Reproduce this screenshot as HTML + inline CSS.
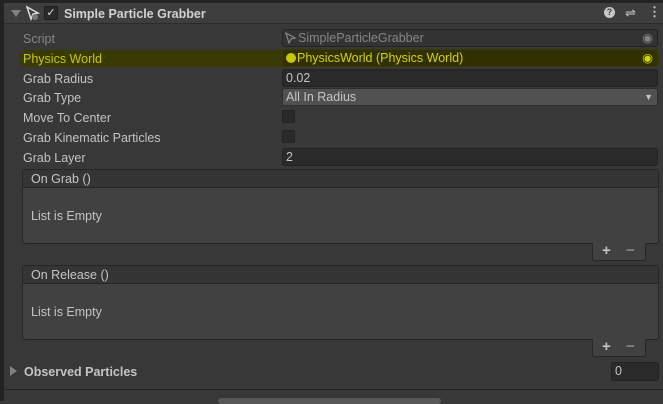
<!DOCTYPE html>
<html><head><style>
body{margin:0;width:663px;height:401px;background:#383838;overflow:hidden;font-family:"Liberation Sans",sans-serif;font-size:12.5px;color:#c4c4c4;position:relative}
div{position:absolute;box-sizing:border-box}
.lbl{left:23px;height:18px;line-height:20px}
.fld{left:282px;width:376px;height:18px;background:#2a2a2a;border:1px solid #232323;border-radius:3px;line-height:17px;padding-left:3px}
.cb{left:282px;width:13px;height:13px;background:#2a2a2a;border:1px solid #232323;border-radius:2px}
.lh{left:22px;width:637px;height:19px;background:#353535;border:1px solid #262626;border-radius:3px 3px 0 0;line-height:18px;padding-left:8px}
.lb{left:22px;width:637px;height:56px;background:#414141;border:1px solid #262626;border-top:none;border-radius:0 0 3px 3px;line-height:56px;padding-left:8px}
.ft{left:592px;width:54px;height:18px;background:#414141;border:1px solid #262626;border-top:none;border-radius:0 0 3px 3px;font-size:15px;font-weight:bold;line-height:16px}
</style></head><body>
<div style="left:0;top:0;width:663px;height:3px;background:#232323"></div>
<div style="left:0;top:0;width:4px;height:401px;background:#232323"></div>
<div style="left:4px;top:3px;width:659px;height:21px;background:#3e3e3e;border-bottom:1px solid #2b2b2b"></div>
<div style="left:11px;top:10px;width:0;height:0;border-left:5px solid transparent;border-right:5px solid transparent;border-top:7px solid #808080"></div>
<svg style="position:absolute;left:25px;top:5px" width="16" height="16"><path d="M2 2 L13 8 L8 9 L6 14 Z" fill="none" stroke="#ddd" stroke-width="1.5"/><circle cx="10" cy="12" r="3" fill="#777"/></svg>
<div style="left:44px;top:6px;width:14px;height:14px;background:#2a2a2a;border:1px solid #1e1e1e;border-radius:2px;color:#ddd;font-size:11px;line-height:12px;text-align:center">✓</div>
<div style="left:64px;top:6px;font-weight:bold;color:#d2d2d2;line-height:16px">Simple Particle Grabber</div>
<div style="left:604px;top:7px;width:11px;height:11px;border-radius:50%;background:#c8c8c8;color:#3e3e3e;font-size:9px;font-weight:bold;text-align:center;line-height:11px">?</div>
<div style="left:625px;top:6px;color:#c8c8c8;font-size:13px;line-height:14px">⇌</div>
<div style="left:648px;top:5px;color:#c8c8c8;font-size:13px;line-height:14px;font-weight:bold">⋮</div>
<div class="lbl" style="top:29px;color:#858585">Script</div>
<div class="fld" style="top:29px;color:#858585;background:#333;padding-left:15px">SimpleParticleGrabber<svg style="position:absolute;left:2px;top:2px" width="12" height="12"><path d="M1 1 L10 6 L6 7 L4 11 Z" fill="none" stroke="#888" stroke-width="1.2"/></svg><span style="position:absolute;right:4px;top:0">◉</span></div>
<div style="left:20px;top:50px;width:640px;height:17px;background:#3a3a05;border-radius:6px"></div>
<div class="lbl" style="top:49px;color:#c8c800">Physics World</div>
<div class="fld" style="top:49px;color:#d4d400;background:#303000;border-color:#3a3a00;padding-left:14px"><span style="position:absolute;left:3px;top:3px;width:10px;height:10px;border-radius:50%;background:#c8c800"></span>PhysicsWorld (Physics World)<span style="position:absolute;right:4px;top:0">◉</span></div>
<div class="lbl" style="top:69px">Grab Radius</div>
<div class="fld" style="top:69px">0.02</div>
<div class="lbl" style="top:88px">Grab Type</div>
<div class="fld" style="top:88px;background:#515151;border-color:#2f2f2f">All In Radius<span style="position:absolute;right:4px;top:0;font-size:9px">▼</span></div>
<div class="lbl" style="top:108px">Move To Center</div>
<div class="cb" style="top:110px"></div>
<div class="lbl" style="top:128px">Grab Kinematic Particles</div>
<div class="cb" style="top:130px"></div>
<div class="lbl" style="top:148px">Grab Layer</div>
<div class="fld" style="top:148px">2</div>
<div class="lh" style="top:169px">On Grab ()</div>
<div class="lb" style="top:188px">List is Empty</div>
<div class="ft" style="top:243px"><span style="position:absolute;left:9px">+</span><span style="position:absolute;left:33px;color:#888">−</span></div>
<div class="lh" style="top:265px">On Release ()</div>
<div class="lb" style="top:284px">List is Empty</div>
<div class="ft" style="top:339px"><span style="position:absolute;left:9px">+</span><span style="position:absolute;left:33px;color:#888">−</span></div>
<div style="left:10px;top:366px;width:0;height:0;border-top:5px solid transparent;border-bottom:5px solid transparent;border-left:7px solid #808080"></div>
<div style="left:24px;top:364px;font-weight:bold;line-height:16px">Observed Particles</div>
<div class="fld" style="left:611px;width:48px;top:362px;height:19px">0</div>
<div style="left:4px;top:389px;width:659px;height:1px;background:#232323"></div>
<div style="left:218px;top:398px;width:223px;height:6px;background:#585858;border-radius:3px"></div>
</body></html>
